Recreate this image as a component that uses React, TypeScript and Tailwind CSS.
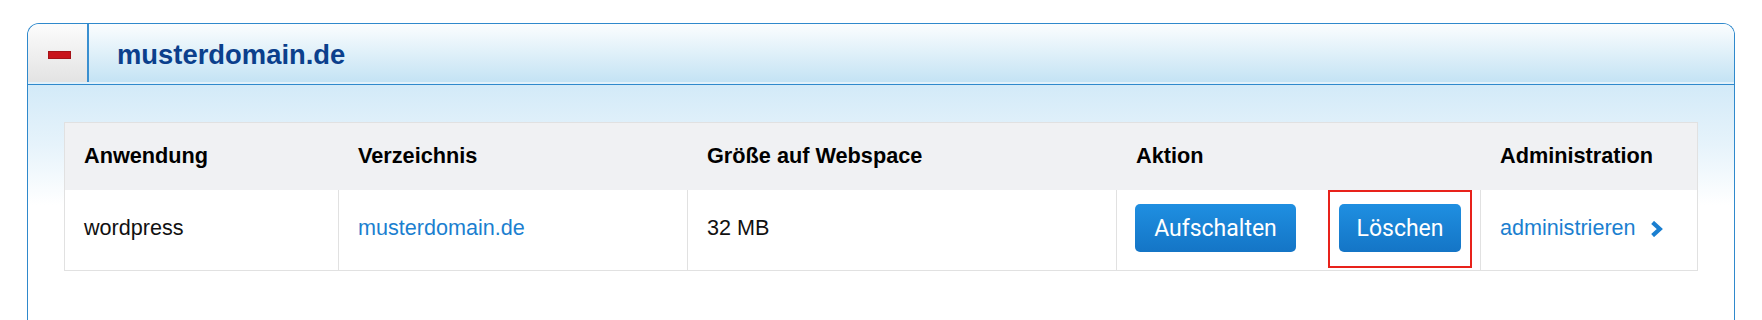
import React from "react";

const sans = { fontFamily: '"Liberation Sans", Arial, Helvetica, sans-serif' };

export default function App() {
  return (
    <div className="w-[1762px] h-[320px] overflow-hidden bg-white pt-[23px] px-[27px]" style={sans}>
      <div className="border border-b-0 border-[#2f89cc] rounded-t-[12px] overflow-hidden">
        {/* header */}
        <div className="flex h-[58px]">
          <div className="w-[61px] shrink-0 flex items-center justify-center border-r-2 border-[#3a8fd0] bg-[linear-gradient(to_bottom,#fcfcfc,#e3e3e3)] rounded-tl-[11px]">
            <div className="w-[23px] h-[8px] bg-[#c8151c] border border-[#a51217] mt-[3px] ml-[3px]" />
          </div>
          <div className="flex-1 flex items-center pl-[28px] pt-[4px] bg-[linear-gradient(to_bottom,#fbfdfe,#c4e3f4)]">
            <span className="text-[27.4px] font-bold text-[#0b3f8c] leading-none">musterdomain.de</span>
          </div>
        </div>
        <div className="h-[2px] bg-[#e2f1fa]" />
        <div className="h-px bg-[#2f89cc]" />
        {/* body */}
        <div className="pt-[37px] px-[36px] pb-[80px] bg-[linear-gradient(to_bottom,#d3eaf8_0px,#e6f3fb_60px,#ffffff_120px)]">
          <div className="border border-[#e1e1e1] bg-white">
            <div className="flex h-[67px] bg-[#f0f1f3] items-center text-[21.7px] font-bold text-black leading-none">
              <div className="w-[273px] pl-[19px] pb-[1px]">Anwendung</div>
              <div className="w-[349px] pl-[20px] pb-[1px]">Verzeichnis</div>
              <div className="w-[429px] pl-[20px] pb-[1px]">Größe auf Webspace</div>
              <div className="w-[364px] pl-[20px] pb-[1px]">Aktion</div>
              <div className="flex-1 pl-[20px] pb-[1px]">Administration</div>
            </div>
            <div className="flex h-[80px] text-[21.6px] leading-none text-[#111]">
              <div className="w-[273px] pl-[19px] flex items-center pb-[4px]">wordpress</div>
              <div className="w-[349px] pl-[19px] border-l border-[#e1e1e1] flex items-center pb-[4px] text-[#1b7fd0]">musterdomain.de</div>
              <div className="w-[429px] pl-[19px] border-l border-[#e1e1e1] flex items-center pb-[4px]">32 MB</div>
              <div className="w-[364px] pl-[18px] border-l border-[#e1e1e1] flex items-center pb-[4px] gap-[43px]">
                <button
                  className="w-[161px] h-[48px] rounded-[5px] bg-[linear-gradient(to_bottom,#1f8fe1,#1475c6)] text-white text-[23px] leading-none"
                  style={{ fontFamily: 'Roboto, "Noto Sans", sans-serif' }}
                >
                  Aufschalten
                </button>
                <div className="relative">
                  <button
                    className="w-[122px] h-[48px] rounded-[5px] bg-[linear-gradient(to_bottom,#1f8fe1,#1475c6)] text-white text-[23px] leading-none"
                    style={{ fontFamily: 'Roboto, "Noto Sans", sans-serif' }}
                  >
                    Löschen
                  </button>
                  <div className="absolute -left-[11px] -right-[11px] -top-[14px] -bottom-[16px] border-2 border-[#e8221b] pointer-events-none" />
                </div>
              </div>
              <div className="flex-1 pl-[19px] border-l border-[#e1e1e1] flex items-center pb-[4px] text-[#1b7fd0]">
                <span>administrieren</span>
                <svg className="ml-[14px] mt-[1px]" width="13" height="16" viewBox="0 0 13 16">
                  <path d="M2.6 1.4 L9.8 8 L2.6 14.6" fill="none" stroke="#1b7fd0" strokeWidth="4.2" strokeLinejoin="miter" />
                </svg>
              </div>
            </div>
          </div>
        </div>
      </div>
    </div>
  );
}
